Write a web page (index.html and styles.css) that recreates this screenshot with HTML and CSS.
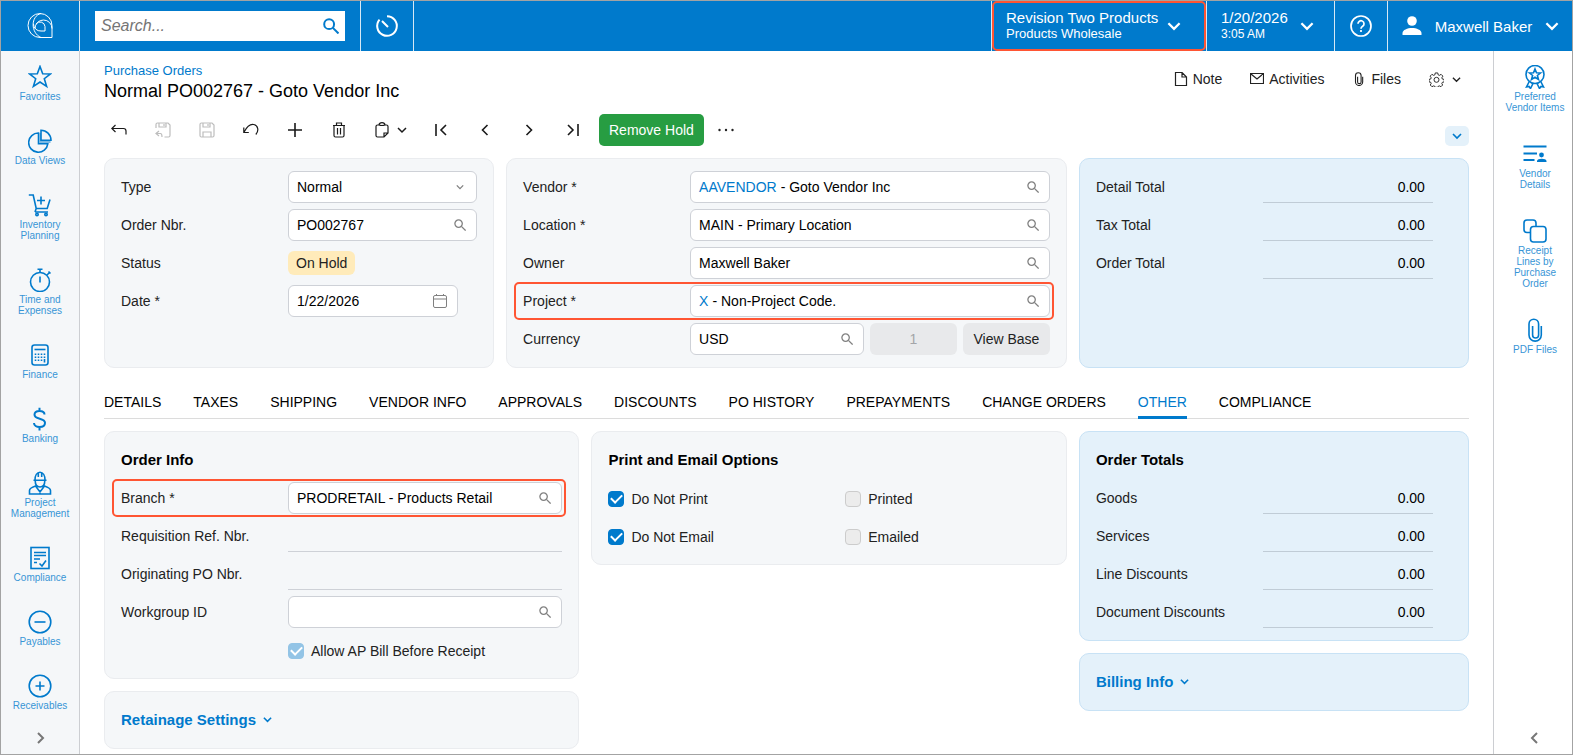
FILE: index.html
```html
<!DOCTYPE html>
<html lang="en">
<head>
  <meta charset="UTF-8">
  <meta name="viewport" content="width=device-width, initial-scale=1.0">
  <title>Purchase Orders - PO002767</title>
  <link rel="stylesheet" href="styles.css">
</head>
<body>
  <!-- Shared icons -->
  <svg class="sprite" aria-hidden="true">
    <symbol id="search" viewBox="0 0 12 12"><circle cx="4.6" cy="4.6" r="3.7"/><path d="M7.4 7.4l4.2 4.2"/></symbol>
    <symbol id="chevron" viewBox="0 0 8 8"><path d="M.8 2.4L4 5.6l3.2-3.2"/></symbol>
    <symbol id="clip" viewBox="0 0 24 24"><path d="M18.3 8v9a6.1 6.1 0 0 1-12.3 0V6a4.8 4.8 0 0 1 9.6 0v11a3 3 0 0 1-6 0V8"/></symbol>
  </svg>

  <div class="app">
    <header class="topbar">
      <a class="cell logo" href="#" aria-label="Home">
        <svg width="26" height="26" viewBox="0 0 26 26">
          <path d="M25 24.5V12.5A12 12 0 1 0 13 24.5z"/>
          <path d="M14 .5C3.500 3 3.500 20 14 24.500"/>
          <path d="M25 15.500A8.500 8.500 0 0 0 8 15.500"/>
          <path d="M18 18V13.500A5 5 0 0 0 9 11M18 18h-4A7 7 0 0 1 6.500 11"/>
        </svg>
      </a>
      <div class="cell search-cell">
        <label class="search-box">
          <input type="text" placeholder="Search..." aria-label="Search">
          <svg width="16" height="16"><use href="#search"/></svg>
        </label>
      </div>
      <button class="cell recent" aria-label="Recent">
        <svg width="24" height="24" viewBox="0 0 24 24"><path d="M12 2.200A9.800 9.800 0 1 1 4.500 5.700M7 7l6 6"/></svg>
      </button>
      <button class="cell company highlight-cell">
        <span class="two-lines"><span>Revision Two Products</span><small>Products Wholesale</small></span>
        <svg class="chev" width="14" height="14"><use href="#chevron"/></svg>
      </button>
      <button class="cell date-cell">
        <span class="two-lines"><span>1/20/2026</span><small class="time">3:05 AM</small></span>
        <svg class="chev" width="14" height="14"><use href="#chevron"/></svg>
      </button>
      <button class="cell help" aria-label="Help">
        <svg width="24" height="24" viewBox="0 0 24 24"><circle cx="12" cy="12" r="10"/><path d="M9 9.800a3 3 0 1 1 4.600 2.500c-1.100.7-1.600 1.200-1.600 2.400M12 16v2"/></svg>
      </button>
      <button class="cell user">
        <svg class="user-icon" width="20" height="20" viewBox="0 0 20 20"><circle cx="10" cy="5" r="4.800"/><path d="M.5 19v-2c0-3 5-5 9.500-5s9.500 2 9.500 5v2z"/></svg>
        <span>Maxwell Baker</span>
        <svg class="chev" width="14" height="14"><use href="#chevron"/></svg>
      </button>
    </header>

    <nav class="sidebar">
      <a href="#"><svg viewBox="0 0 24 24"><path d="M12 1.500l2.700 7.300 7.800.2-6.200 4.700 2.300 7.600L12 17l-6.600 4.300 2.300-7.600L1.500 9l7.800-.2z"/></svg>Favorites</a>
      <a href="#"><svg viewBox="0 0 24 24"><path d="M10.500 4a9.600 9.600 0 1 0 9.300 10.800h-9.300z"/><path class="shade" d="M11 4h2v7.500h9.500V14H11z"/><path d="M13 1.300v9.900h10A10 10 0 0 0 13 1.300z"/></svg>Data Views</a>
      <a href="#"><svg viewBox="0 0 24 24"><path d="M.8 2h4.400l3 13.500h11L22 6.500M7 19h13M8.200 15.500L7 19M13 3.500v8M9 7.500h8"/><circle cx="9" cy="21.500" r="1.200"/><circle cx="18" cy="21.500" r="1.200"/></svg>Inventory Planning</a>
      <a href="#"><svg viewBox="0 0 24 24"><circle cx="12" cy="14" r="9.500"/><path d="M12 8.500v6M12 1v3.500M9.500 1.200h5M19 7l2.500-2.500M20.500 3.500l2 2"/></svg>Time and Expenses</a>
      <a href="#"><svg viewBox="0 0 24 24"><rect x="4" y="2" width="16" height="20" rx="2.500"/><path d="M6.500 6.500h11"/><path class="dots" d="M7.500 10.500v9M10.500 10.500v9M13.500 10.500v9M16.500 10.500v5"/><path d="M16.500 16v3.500"/></svg>Finance</a>
      <a href="#"><svg class="dollar" viewBox="0 0 24 24"><path d="M16.500 7.500C16.500 5 14 4 11.500 4S6.500 5.200 6.500 7.800c0 5.200 10.500 2.700 10.500 8C17 18.500 14.500 20 11.500 20S6 18.500 6 16M11.500.8V4m0 16v3.500"/></svg>Banking</a>
      <a href="#"><svg viewBox="0 0 24 24"><path d="M5.500 9.200h13M7 9C7 4.500 9 1.200 12 1.200S17 4.500 17 9M10.300 2v4M13.700 2v4M7.200 9.500c0 4 1.900 6.500 4.800 6.500s4.800-2.500 4.800-6.500M1.500 23v-3.500c0-2.500 3-3.500 6-4.500l4.500 6 4.500-6c3 1 6 2 6 4.500V23zM12 19v4"/></svg>Project Management</a>
      <a href="#"><svg viewBox="0 0 24 24"><rect x="3" y="1.500" width="18" height="21"/><path d="M6 6.500h12M6 9.500h12M6 13h6M6 16.500h3M11.500 17.500l2.500 2.500 4-5.500"/></svg>Compliance</a>
      <a href="#"><svg viewBox="0 0 24 24"><circle cx="12" cy="12" r="10.800"/><path d="M6.500 12h11"/></svg>Payables</a>
      <a href="#"><svg viewBox="0 0 24 24"><circle cx="12" cy="12" r="10.800"/><path d="M7.500 12h9M12 7.500v9"/></svg>Receivables</a>
      <button class="more" aria-label="Expand menu"><svg viewBox="0 0 12 12"><path d="M4 1l5 5-5 5"/></svg></button>
    </nav>

    <main class="content">
      <div class="page-head">
        <div>
          <a class="crumb" href="#">Purchase Orders</a>
          <h1>Normal PO002767 - Goto Vendor Inc</h1>
        </div>
        <div class="page-actions">
          <button><svg width="14" height="14" viewBox="0 0 14 14"><path d="M1.500.5h6.500L12.500 5v8.500h-11zM8 .5V5h4.500"/></svg>Note</button>
          <button><svg width="14" height="14" viewBox="0 0 14 14"><path d="M.5 1.500h13v10H.5zM1 2l6 5 6-5"/></svg>Activities</button>
          <button><svg width="14" height="14"><use href="#clip" stroke-width="1.900"/></svg>Files</button>
          <button class="gear" aria-label="Settings">
            <svg width="15" height="15" viewBox="0 0 24 24"><path stroke-width="1.500" d="M10 1.500h4l.6 3 2 .9 2.700-1.700 2.900 2.900-1.700 2.700.9 2 3 .6v4l-3 .6-.9 2 1.300 2.300-2.700 2.700-2.500-1.300-2 .8-.6 1.500h-4l-.6-1.500-2-.8-2.700 1.300-2.700-2.700 1.500-2.500-.9-2-2.600-.5v-4l2.600-.5.9-2L1.800 6.600l2.900-2.900 2.700 1.700 2-.9z"/><circle cx="12" cy="12.500" r="4" stroke-width="1.500"/></svg>
            <svg width="9" height="9"><use href="#chevron"/></svg>
          </button>
        </div>
      </div>

      <div class="toolbar">
        <div class="tools">
          <button aria-label="Back"><svg viewBox="0 0 16 16"><path d="M4.500 3L.8 6.500l3.700 3.500M1 6.500h11.500q2.500 0 2.500 2.500v3.500"/></svg></button>
          <button aria-label="Save and close" disabled><svg viewBox="0 0 16 16"><path d="M1 6V2.500q0-1.500 1.500-1.500H13l2 2v10.500q0 1.500-1.500 1.500H9.500M4 1v4h7V1M9 2v2M4 9L1 11.500 4 14M1 11.500h4.500q1.500 0 1.500 3.500"/></svg></button>
          <button aria-label="Save" disabled><svg viewBox="0 0 16 16"><path d="M2.500 1H13l2 2v10.500q0 1.500-1.500 1.500h-11Q1 15 1 13.500v-11Q1 1 2.500 1zM4 1v4h7V1M9 2v2M4 15v-5h8v5"/></svg></button>
          <button aria-label="Undo"><svg viewBox="0 0 16 16"><path d="M.8 5.500v5h5M1 10.200C4 4.500 7 2 10.500 2.500c4.500.7 5.800 6 2.300 10"/></svg></button>
          <button aria-label="Add"><svg class="thick" viewBox="0 0 16 16"><path d="M8 1v14M1 8h14"/></svg></button>
          <button aria-label="Delete"><svg viewBox="0 0 16 16"><path d="M2 3.500h12M5.500 3.500V1h5v2.500M3 3.500v10q0 1.500 1.500 1.500h7q1.500 0 1.500-1.500v-10M6.500 6v6.500M9.500 6v6.500"/></svg></button>
          <button class="wide" aria-label="Clipboard"><svg viewBox="0 0 16 16"><path d="M11 3h1.500Q14 3 14 4.500V11l-4 4H3.500Q2 15 2 13.500v-9Q2 3 3.500 3H5q.3-2.300 3-2.300T11 3M5 3q3 1 6 0M10 15v-4h4"/></svg><svg class="small" viewBox="0 0 8 8"><use href="#chevron"/></svg></button>
          <button aria-label="First"><svg class="thick" viewBox="0 0 16 16"><path d="M3 2v12M13 3L8 8l5 5"/></svg></button>
          <button aria-label="Previous"><svg class="thick" viewBox="0 0 16 16"><path d="M10.500 3l-5 5 5 5"/></svg></button>
          <button aria-label="Next"><svg class="thick" viewBox="0 0 16 16"><path d="M5.500 3l5 5-5 5"/></svg></button>
          <button aria-label="Last"><svg class="thick" viewBox="0 0 16 16"><path d="M3 3l5 5-5 5M13 2v12"/></svg></button>
        </div>
        <button class="primary">Remove Hold</button>
        <button class="dots-btn" aria-label="More"><svg viewBox="0 0 16 16"><circle cx="1.500" cy="8" r="1.200"/><circle cx="8" cy="8" r="1.200"/><circle cx="14.500" cy="8" r="1.200"/></svg></button>
        <button class="collapse" aria-label="Collapse summary"><svg width="10" height="10"><use href="#chevron"/></svg></button>
      </div>

      <div class="summary-grid">
        <section class="card">
          <div class="row"><label for="type">Type</label>
            <div class="field"><select id="type"><option>Normal</option></select><svg class="arrow"><use href="#chevron"/></svg></div></div>
          <div class="row"><label for="orderNbr">Order Nbr.</label>
            <div class="field"><input id="orderNbr" type="text" value="PO002767"><svg><use href="#search"/></svg></div></div>
          <div class="row"><span>Status</span><span class="badge">On Hold</span></div>
          <div class="row"><label for="date">Date *</label>
            <div class="field short"><input id="date" type="text" value="1/22/2026"><svg class="cal" viewBox="0 0 14 14"><path d="M2 1.500h10q1.500 0 1.500 1.500v9q0 1.500-1.500 1.500H2Q.5 13.500.5 12V3Q.5 1.500 2 1.500zM.5 5h13M3.500 0v1.500M10.500 0v1.500"/></svg></div></div>
        </section>

        <section class="card">
          <div class="row"><label for="vendor">Vendor *</label>
            <div class="field"><a href="#">AAVENDOR</a><input id="vendor" type="text" value="- Goto Vendor Inc"><svg><use href="#search"/></svg></div></div>
          <div class="row"><label for="location">Location *</label>
            <div class="field"><input id="location" type="text" value="MAIN - Primary Location"><svg><use href="#search"/></svg></div></div>
          <div class="row"><label for="owner">Owner</label>
            <div class="field"><input id="owner" type="text" value="Maxwell Baker"><svg><use href="#search"/></svg></div></div>
          <div class="row highlight"><label for="project">Project *</label>
            <div class="field"><a href="#">X</a><input id="project" type="text" value="- Non-Project Code."><svg><use href="#search"/></svg></div></div>
          <div class="row"><label for="currency">Currency</label>
            <div class="currency">
              <div class="field"><input id="currency" type="text" value="USD"><svg><use href="#search"/></svg></div>
              <input class="rate" type="text" value="1" aria-label="Rate" disabled>
              <button class="view-base">View Base</button>
            </div></div>
        </section>

        <section class="card totals">
          <div class="row"><label for="detailTotal">Detail Total</label><input class="line" id="detailTotal" value="0.00" readonly></div>
          <div class="row"><label for="taxTotal">Tax Total</label><input class="line" id="taxTotal" value="0.00" readonly></div>
          <div class="row"><label for="orderTotal">Order Total</label><input class="line" id="orderTotal" value="0.00" readonly></div>
        </section>
      </div>

      <div class="tabs" role="tablist">
        <button role="tab">DETAILS</button>
        <button role="tab">TAXES</button>
        <button role="tab">SHIPPING</button>
        <button role="tab">VENDOR INFO</button>
        <button role="tab">APPROVALS</button>
        <button role="tab">DISCOUNTS</button>
        <button role="tab">PO HISTORY</button>
        <button role="tab">PREPAYMENTS</button>
        <button role="tab">CHANGE ORDERS</button>
        <button role="tab" class="active" aria-selected="true">OTHER</button>
        <button role="tab">COMPLIANCE</button>
      </div>

      <div class="other-grid">
        <div class="column">
          <section class="card">
            <h2>Order Info</h2>
            <div class="row highlight"><label for="branch">Branch *</label>
              <div class="field"><input id="branch" type="text" value="PRODRETAIL - Products Retail"><svg><use href="#search"/></svg></div></div>
            <div class="row"><label for="reqNbr">Requisition Ref. Nbr.</label><input class="line" id="reqNbr" readonly></div>
            <div class="row"><label for="origNbr">Originating PO Nbr.</label><input class="line" id="origNbr" readonly></div>
            <div class="row"><label for="workgroup">Workgroup ID</label>
              <div class="field"><input id="workgroup" type="text"><svg><use href="#search"/></svg></div></div>
            <div class="row"><span></span><label class="check"><input type="checkbox" checked disabled>Allow AP Bill Before Receipt</label></div>
          </section>
          <section class="card">
            <h2><button class="toggle">Retainage Settings<svg width="9" height="9"><use href="#chevron"/></svg></button></h2>
          </section>
        </div>

        <div class="column">
          <section class="card">
            <h2>Print and Email Options</h2>
            <div class="checks">
              <label class="check"><input type="checkbox" checked>Do Not Print</label>
              <label class="check"><input type="checkbox" disabled>Printed</label>
              <label class="check"><input type="checkbox" checked>Do Not Email</label>
              <label class="check"><input type="checkbox" disabled>Emailed</label>
            </div>
          </section>
        </div>

        <div class="column">
          <section class="card totals">
            <h2>Order Totals</h2>
            <div class="row"><label for="goods">Goods</label><input class="line" id="goods" value="0.00" readonly></div>
            <div class="row"><label for="services">Services</label><input class="line" id="services" value="0.00" readonly></div>
            <div class="row"><label for="lineDisc">Line Discounts</label><input class="line" id="lineDisc" value="0.00" readonly></div>
            <div class="row"><label for="docDisc">Document Discounts</label><input class="line" id="docDisc" value="0.00" readonly></div>
          </section>
          <section class="card totals">
            <h2><button class="toggle">Billing Info<svg width="9" height="9"><use href="#chevron"/></svg></button></h2>
          </section>
        </div>
      </div>
    </main>

    <aside class="sidebar side-panel">
      <a href="#"><svg viewBox="0 0 24 24"><circle cx="12" cy="9.500" r="9"/><path d="M12 4l1.500 3.800 4 .2-3.100 2.500 1.100 4L12 12.300 8.500 14.500l1.100-4L6.500 8l4-.2zM6 17l-2.500 5 2.500-.5 1.500 2 2.500-5M18 17l2.500 5-2.500-.5-1.500 2-2.500-5"/></svg>Preferred Vendor Items</a>
      <a href="#"><svg class="list" viewBox="0 0 24 24"><path d="M.5 4.500h23M.5 11.500h13.500M.5 18h11"/><path class="solid" d="M14 20v-1c0-3 9.500-3 9.500 0v1z"/><circle class="solid" cx="18.500" cy="13" r="2.400"/></svg>Vendor Details</a>
      <a href="#"><svg viewBox="0 0 24 24"><path d="M7 13.500H4Q1 13.500 1 10.500V4q0-3 3-3h6q3 0 3 3v3.500"/><rect x="7.500" y="7.500" width="15.500" height="15.500" rx="3"/></svg>Receipt Lines by Purchase Order</a>
      <a href="#"><svg><use href="#clip"/></svg>PDF Files</a>
      <button class="more" aria-label="Collapse panel"><svg viewBox="0 0 12 12"><path d="M8 1L3 6l5 5"/></svg></button>
    </aside>
  </div>
</body>
</html>
```
FILE: styles.css
```css
* {
  margin: 0;
  padding: 0;
  box-sizing: border-box;
}

body,
button,
input,
select {
  font-family: "Liberation Sans", Arial, sans-serif;
  font-size: 14px;
}

button {
  background: none;
  border: none;
  color: inherit;
  cursor: pointer;
}

a {
  color: #007acc;
  text-decoration: none;
}

svg {
  fill: none;
  stroke: currentColor;
  flex-shrink: 0;
}

.sprite {
  position: absolute;
  width: 0;
  height: 0;
}

.app {
  display: grid;
  grid-template-columns: 79px minmax(0, 1fr) 79px;
  grid-template-rows: 50px 1fr;
  min-height: 100vh;
  border: 1px solid #a3a3a3;
  background: #fff;
  color: #222;
}

/* Top bar */
.topbar {
  grid-column: 1 / -1;
  display: flex;
  background: #007acc;
  color: #fff;
}

.cell {
  display: flex;
  align-items: center;
  border-left: 1px solid #d6e8f5;
  color: #fff;
  font-size: 15px;
  text-align: left;
}

.logo {
  width: 78px;
  border-left: none;
  justify-content: center;
}

.search-cell {
  width: 281px;
  padding: 0 15px;
}

.search-box {
  display: flex;
  flex: 1;
  align-items: center;
  height: 30px;
  padding: 0 6px;
  background: #fff;
  color: #007acc;
  stroke-width: 1.5;
}

.search-box input {
  flex: 1;
  min-width: 0;
  border: none;
  outline: none;
  font-size: 16px;
}

.search-box input::placeholder {
  color: #757575;
  font-style: italic;
}

.recent {
  width: 54px;
  margin-right: auto;
  border-right: 1px solid #d6e8f5;
  justify-content: center;
  stroke-width: 2;
}

.chev {
  stroke-width: 1.3;
}

.company {
  width: 215px;
  padding-left: 14px;
  gap: 9px;
}

.highlight-cell {
  position: relative;
}

.highlight-cell::after {
  content: "";
  position: absolute;
  inset: 0;
  border: 2px solid #ff5533;
  border-radius: 5px;
}

.two-lines {
  display: flex;
  flex-direction: column;
  line-height: 16px;
}

.two-lines small {
  font-size: 13px;
}

.two-lines .time {
  font-size: 12px;
}

.date-cell {
  width: 128px;
  padding: 0 20px 0 14px;
  justify-content: space-between;
}

.help {
  width: 53px;
  justify-content: center;
  stroke-width: 1.7;
}

.user {
  width: 185px;
  padding: 0 13px 0 14px;
  justify-content: space-between;
}

.user-icon {
  fill: currentColor;
  stroke: none;
}

/* Side menus */
.sidebar {
  display: flex;
  flex-direction: column;
  padding: 0 4px;
  background: #f5f7f9;
  border-right: 1px solid #ccced2;
}

.sidebar a {
  display: flex;
  flex-direction: column;
  align-items: center;
  gap: 2px;
  padding: 14px 0 13px;
  font-size: 10px;
  line-height: 11px;
  text-align: center;
  color: #3795d6;
}

.sidebar a svg {
  width: 24px;
  height: 24px;
  stroke: #007acc;
  stroke-width: 1.6;
}

.sidebar .shade {
  fill: #7ab9e4;
  stroke: none;
}

.sidebar .dots {
  stroke-dasharray: 1.5 1.5;
}

.sidebar a .dollar,
.sidebar a .list {
  stroke-width: 2;
}

.sidebar .solid {
  fill: #007acc;
  stroke: none;
}

.side-panel {
  padding: 0 7px 0 11px;
  background: #fff;
  border-right: none;
  border-left: 1px solid #ccced2;
}

.side-panel a {
  padding-bottom: 15px;
}

.more {
  margin-top: auto;
  height: 30px;
  color: #777;
}

.more svg {
  width: 12px;
  height: 12px;
  stroke-width: 2;
}

/* Page title */
.content {
  padding: 12px 24px 4px;
}

.page-head {
  display: flex;
  justify-content: space-between;
  align-items: flex-start;
}

.crumb {
  display: block;
  font-size: 13px;
  line-height: 16px;
}

h1 {
  font-size: 18px;
  font-weight: normal;
  line-height: 24px;
  color: #000;
}

.page-actions {
  display: flex;
  gap: 28px;
  height: 32px;
  padding-right: 8px;
}

.page-actions button {
  display: flex;
  align-items: center;
  gap: 5px;
}

.page-actions .gear {
  gap: 8px;
}

.page-actions svg {
  stroke-width: 1.2;
}

/* Toolbar */
.toolbar {
  display: flex;
  align-items: center;
  gap: 11px;
  margin: 11px 0 12px;
}

.tools {
  display: flex;
  gap: 14px;
}

.tools button {
  display: flex;
  align-items: center;
  justify-content: center;
  width: 30px;
  height: 32px;
  color: #1a1a1a;
}

.tools svg,
.dots-btn svg {
  width: 16px;
  height: 16px;
  stroke-width: 1.2;
}

.tools .wide {
  width: 44px;
  gap: 7px;
}

.tools .small {
  width: 10px;
  height: 10px;
}

.tools .thick {
  stroke-width: 1.6;
}

.tools button:disabled {
  color: #bdbdbd;
}

.primary {
  height: 32px;
  padding: 0 10px;
  border-radius: 5px;
  background: #279d42;
  color: #fff;
}

.dots-btn {
  display: flex;
  align-items: center;
  justify-content: center;
  width: 22px;
  height: 32px;
}

.dots-btn svg {
  fill: currentColor;
  stroke: none;
}

.collapse {
  display: flex;
  align-items: center;
  justify-content: center;
  align-self: flex-end;
  width: 24px;
  height: 20px;
  margin-left: auto;
  border-radius: 5px;
  background: #e4f1fa;
  color: #007acc;
  stroke-width: 1.3;
}

/* Cards and fields */
.summary-grid,
.other-grid {
  display: grid;
  gap: 12px;
}

.summary-grid {
  grid-template-columns: 16fr 23fr 16fr;
}

.other-grid {
  grid-template-columns: 39fr 39fr 32fr;
}

.column {
  display: flex;
  flex-direction: column;
  gap: 12px;
  min-width: 0;
}

.card {
  display: flex;
  flex-direction: column;
  gap: 6px;
  min-width: 0;
  padding: 12px 16px;
  border: 1px solid #eaecef;
  border-radius: 10px;
  background: #f5f7f9;
}

.totals {
  border-color: #c8e2f5;
  background: #e4f1fa;
}

.card h2 {
  height: 32px;
  font-size: 15px;
  line-height: 32px;
  color: #000;
}

.row {
  display: grid;
  grid-template-columns: 167px minmax(0, 1fr);
  align-items: center;
  height: 32px;
}

.highlight {
  position: relative;
}

.highlight::after {
  content: "";
  position: absolute;
  inset: -3px -4px -3px -9px;
  border: 2px solid #ff5533;
  border-radius: 5px;
  pointer-events: none;
}

.field {
  display: flex;
  align-items: center;
  gap: 4px;
  min-width: 0;
  height: 32px;
  padding: 0 10px 0 8px;
  border: 1px solid #ced1d7;
  border-radius: 6px;
  background: #fff;
}

.field input,
.field select {
  flex: 1;
  min-width: 0;
  border: none;
  outline: none;
  background: none;
  color: #000;
  appearance: none;
}

.field svg {
  width: 12px;
  height: 12px;
  color: #808080;
  stroke-width: 1.3;
}

.field .cal {
  width: 14px;
  height: 14px;
  stroke-width: 1;
}

.field .arrow {
  width: 8px;
  height: 8px;
  margin-right: 2px;
}

.short,
.totals .line {
  width: 170px;
}

.badge {
  justify-self: start;
  padding: 0 8px;
  border-radius: 6px;
  background: #ffebba;
  line-height: 24px;
}

.line {
  width: 100%;
  height: 32px;
  padding: 0 8px;
  border: none;
  border-bottom: 1px solid #ced1d7;
  outline: none;
  background: none;
  text-align: right;
}

.totals .line {
  border-color: #c0ccd6;
}

.currency {
  display: grid;
  grid-template-columns: 2fr 1fr 1fr;
  gap: 6px;
}

.rate,
.view-base {
  min-width: 0;
  height: 32px;
  border: none;
  border-radius: 6px;
  background: #e8e9eb;
  text-align: center;
}

.rate {
  color: #a3a5a8;
}

.check {
  display: flex;
  align-items: center;
  gap: 7px;
  height: 32px;
  padding-top: 2px;
}

.check input {
  display: grid;
  place-items: center;
  width: 16px;
  height: 16px;
  border: 1px solid #ccc;
  border-radius: 4px;
  background: #ececec;
  appearance: none;
}

.check input:checked {
  border-color: #007acc;
  background: #007acc;
}

.check input:checked::before {
  content: "";
  width: 5px;
  height: 9px;
  margin-bottom: 3px;
  border: solid #fff;
  border-width: 0 2px 2px 0;
  transform: rotate(45deg);
}

.check input:checked:disabled {
  border-color: #93c4e6;
  background: #93c4e6;
}

.checks {
  display: grid;
  grid-template-columns: 1fr 1fr;
  gap: 6px 32px;
}

.toggle {
  display: flex;
  align-items: center;
  gap: 7px;
  height: 30px;
  font-size: 15px;
  font-weight: bold;
  color: #007acc;
}

.toggle svg {
  stroke-width: 1.4;
}

/* Tabs */
.tabs {
  display: flex;
  gap: 32px;
  margin: 16px 0 12px;
  border-bottom: 1px solid #dcdcdc;
}

.tabs button {
  height: 35px;
  margin-bottom: -1px;
  padding-top: 3px;
  border-bottom: 3px solid transparent;
  color: #000;
}

.tabs .active {
  border-bottom-color: #007acc;
  color: #007acc;
}
```
